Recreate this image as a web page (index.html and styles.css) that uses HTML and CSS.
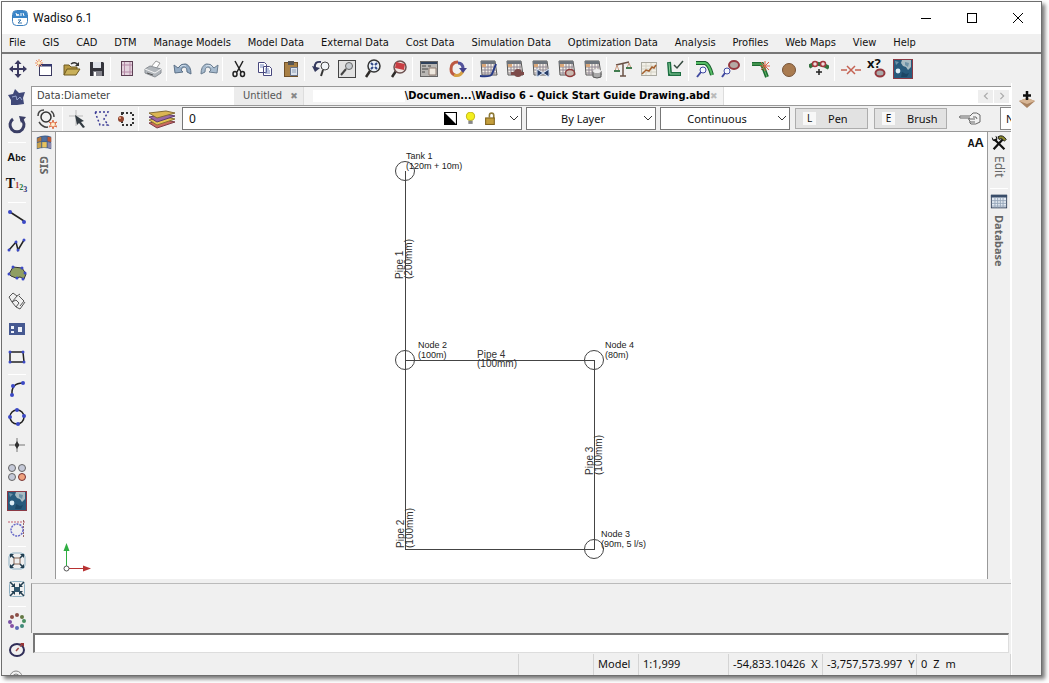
FILE: index.html
```html
<!DOCTYPE html>
<html lang="en">
<head>
<meta charset="utf-8">
<title>Wadiso 6.1</title>
<link rel="stylesheet" href="styles.css">
</head>
<body>
<svg class="defs" aria-hidden="true">
  <defs>
    <symbol id="grid-sheet" viewBox="0 0 20 20">
      <path d="M2 2h14l2 14H3z" fill="#f4efe6" stroke="#555" />
      <path d="M2 2h14v3H2z" fill="#6d747c"/>
      <path d="M3 8h13M3 11h14M3 14h14M6 5v11M9 5v11M12 5v11M15 5v11" stroke="#8f8794" fill="none"/>
      <path d="M3 5h4v3H3z" fill="#d9a77a"/>
    </symbol>
    <symbol id="globe" viewBox="0 0 20 20">
      <rect x=".5" y=".5" width="19" height="19" fill="#285a7c" stroke="#8c3a45"/>
      <path d="M9 1h9v7l-3 3-2-3-3-1-2-3z" fill="#a9bcc4"/>
      <path d="M12 3l4 1-1 4-3-2zM2 2l4 1-3 3z" fill="#6e93a8"/>
      <circle cx="5" cy="12" r="2.4" fill="#dcecf5"/>
      <path d="M9 13l4 2 3-1-2 4H8z" fill="#1c4665"/>
    </symbol>
    <symbol id="chevron" viewBox="0 0 10 10"><path d="M1 3l4 4 4-4" fill="none" stroke="#333"/></symbol>
  </defs>
</svg>
<div class="window">
  <header class="titlebar">
    <svg class="logo" viewBox="0 0 16 16"><rect x=".5" y=".5" width="15" height="15" rx="4" fill="#fff" stroke="#3d7fbd"/><path d="M1 8V4q0-3 3-3h8q3 0 3 3v4z" fill="#3a85c8"/><path d="M4 3l1 3 1-2 1 2M9 3v3M11 3l1 3" stroke="#fff" fill="none"/><path d="M6 10h3l-3 3h4" fill="none" stroke="#3a78ad"/></svg>
    <h1 class="title">Wadiso 6.1</h1>
    <div class="caption">
      <button class="caption-btn" aria-label="Minimize"><svg viewBox="0 0 12 12"><path d="M1 6.5h10" stroke="#000"/></svg></button>
      <button class="caption-btn" aria-label="Maximize"><svg viewBox="0 0 12 12"><rect x="1.5" y="1.5" width="9" height="9" fill="none" stroke="#000"/></svg></button>
      <button class="caption-btn" aria-label="Close"><svg viewBox="0 0 12 12"><path d="M1 1l10 10M11 1L1 11" stroke="#000" fill="none"/></svg></button>
    </div>
  </header>
  <nav class="menubar">
    <button>File</button><button>GIS</button><button>CAD</button><button>DTM</button><button>Manage Models</button><button>Model Data</button><button>External Data</button><button>Cost Data</button><button>Simulation Data</button><button>Optimization Data</button><button>Analysis</button><button>Profiles</button><button>Web Maps</button><button>View</button><button>Help</button>
  </nav>
  <div class="toolbar">
    <button class="tool first" aria-label="Move"><svg viewBox="0 0 20 20"><path d="M10 3v14M3 10h14" stroke="#3b3960" stroke-width="2"/><path d="M10 1l3.500 4h-7zM10 19l3.500-4h-7zM1 10l4-3.500v7zM19 10l-4-3.500v7z" fill="#3b3960"/></svg></button>
    <button class="tool" aria-label="New"><svg viewBox="0 0 20 20"><rect x="4.500" y="5.500" width="12" height="11" fill="#fff" stroke="#3b3960"/><path d="M4 5h13v2.500H4z" fill="#34386e"/><path d="M4 0v8M0 4h8M1 1l6 6M7 1L1 7" stroke="#ee9468"/><circle cx="4" cy="4" r="1.500" fill="#fff2c0"/></svg></button>
    <button class="tool" aria-label="Open"><svg viewBox="0 0 20 20"><path d="M3 16V6h5l2 2h6v3" fill="#b89a45" stroke="#6f5a20"/><path d="M3 16l3-6h13l-4 6z" fill="#c9b05a" stroke="#6f5a20"/><path d="M10 5q4-3 7 1" fill="none" stroke="#333" stroke-width="1.500"/><path d="M18 3v4h-4z" fill="#333"/></svg></button>
    <button class="tool" aria-label="Save"><svg viewBox="0 0 20 20"><path d="M3 3h13l1 1v13H3z" fill="#34343c"/><path d="M6 3h8v6H6z" fill="#dfe3ea"/><path d="M6 12h9v5H6z" fill="#85858d"/><path d="M7 13h2v4H7z" fill="#fff"/></svg></button>
    <span class="sep"></span>
    <button class="tool" aria-label="Page layout"><svg viewBox="0 0 20 20"><rect x="4.500" y="2.500" width="11" height="14" fill="#e4d3de" stroke="#5d4054"/><path d="M7.500 3v13M13 3v13M5 6h10M5 13h10" stroke="#b78ba8" fill="none"/></svg></button>
    <button class="tool" aria-label="Print"><svg viewBox="0 0 20 20"><path d="M8 8l5-6 4 2-4 6z" fill="#fff" stroke="#999"/><path d="M2 10l5-3 11 3v4l-6 4-10-4z" fill="#b1b6bb" stroke="#8b9096"/><path d="M2 10l10 4 6-4" stroke="#f5f5f5" fill="none"/><path d="M4 14l6 2" stroke="#555"/></svg></button>
    <span class="sep"></span>
    <button class="tool" aria-label="Undo"><svg viewBox="0 0 20 20"><path d="M5 9q3-5 8-4 5 2 5 10l-4-2q0-5-3-5-2 0-3 3l2 2-8 1-1-8z" fill="#93abc4" stroke="#5d7187"/><path d="M7 8q3-3 6-1" stroke="#d3e0ec" fill="none"/></svg></button>
    <button class="tool" aria-label="Redo"><svg viewBox="0 0 20 20"><path d="M15 9q-3-5-8-4-5 2-5 10l4-2q0-5 3-5 2 0 3 3l-2 2 8 1 1-8z" fill="#a7bbce" stroke="#6a7d90"/><path d="M13 8q-3-3-6-1" stroke="#d9e4ee" fill="none"/></svg></button>
    <span class="sep"></span>
    <button class="tool" aria-label="Cut"><svg viewBox="0 0 20 20" fill="none" stroke="#222" stroke-width="1.500"><path d="M6 2l6 11M14 2L8 13"/><ellipse cx="6" cy="15" rx="2" ry="2.500"/><ellipse cx="13.500" cy="15" rx="2" ry="2.500"/></svg></button>
    <button class="tool" aria-label="Copy"><svg viewBox="0 0 20 20"><path d="M3.500 3.500h6l2 2v8h-8zM8.500 7.500h6l2 2v7h-8z" fill="#fff" stroke="#48487e"/><path d="M5 6h4M5 8h3M10 10h4M10 12h5M10 14h5" stroke="#7486bd"/></svg></button>
    <button class="tool" aria-label="Paste"><svg viewBox="0 0 20 20"><rect x="3.500" y="3.500" width="13" height="14" fill="#a98045" stroke="#6f5028"/><path d="M7 2h6v4H7z" fill="#555"/><path d="M9.500 8.500h7v8h-7z" fill="#dce3ed" stroke="#66738b"/><path d="M11 11h4M11 13h4" stroke="#8f9fb6"/></svg></button>
    <span class="sep"></span>
    <button class="tool" aria-label="Zoom previous"><svg viewBox="0 0 20 20"><circle cx="14" cy="7" r="4" fill="#f2f5f8" stroke="#444"/><path d="M12 11l-2 6" stroke="#333" stroke-width="2"/><path d="M10 3Q3 2 4 9" fill="none" stroke="#343a5e" stroke-width="2"/><path d="M1 7l3 6 5-4z" fill="#343a5e"/></svg></button>
    <button class="tool" aria-label="Zoom window"><svg viewBox="0 0 20 20"><rect x="1.500" y="1.500" width="17" height="17" fill="#e2e2e2" stroke="#444"/><path d="M9 10l-5 6" stroke="#444" stroke-width="2"/><circle cx="12" cy="7" r="3.500" fill="#c7ccd1" stroke="#666"/></svg></button>
    <button class="tool" aria-label="Zoom extents"><svg viewBox="0 0 20 20"><path d="M7 12l-4 6" stroke="#2e2b28" stroke-width="2.500"/><circle cx="11" cy="7" r="6" fill="#eaf1f8" stroke="#333" stroke-width="1.500"/><path d="M8 4l2 2M14 4l-2 2M8 10l2-2M14 10l-2-2" stroke="#304887" stroke-width="2"/></svg></button>
    <button class="tool" aria-label="Zoom selection"><svg viewBox="0 0 20 20"><path d="M7 12l-4 6" stroke="#2e2b28" stroke-width="2.500"/><circle cx="11" cy="8" r="6" fill="#efe6e2" stroke="#6c5150" stroke-width="1.500"/><path d="M7 3l9 2-1 6-9-2z" fill="#c93e43"/></svg></button>
    <span class="sep"></span>
    <button class="tool" aria-label="Properties"><svg viewBox="0 0 20 20"><rect x="1.500" y="2.500" width="17" height="15" fill="#b9b7b4" stroke="#666"/><path d="M2 3h16v2H2z" fill="#30425c"/><path d="M3 7h4M9 7h3M3 10h6M3 13h3" stroke="#444"/><path d="M10 9h7v7h-7z" fill="#eee8df" stroke="#8d7b70"/></svg></button>
    <button class="tool wide" aria-label="Refresh"><svg viewBox="0 0 20 20" fill="none"><path d="M11 3Q4 3 4 10q0 5 4 6" stroke="#bd5a43" stroke-width="3"/><path d="M7 16q6 2 9-4" stroke="#d6a144" stroke-width="3"/><path d="M11 4q5 0 5 6" stroke="#53539b" stroke-width="3"/><path d="M12 9h8l-4 5z" fill="#45428c"/></svg></button>
    <span class="sep"></span>
    <button class="tool" aria-label="Pipe table"><svg viewBox="0 0 20 20"><use href="#grid-sheet"/><path d="M1 17q11 1 12-2l4-10" stroke="#263a86" stroke-width="2" fill="none"/></svg></button>
    <button class="tool" aria-label="Pump table"><svg viewBox="0 0 20 20"><use href="#grid-sheet"/><circle cx="13" cy="14" r="4" fill="#7c4a49"/><path d="M6 13h13v3H6z" fill="#7c4a49"/></svg></button>
    <button class="tool" aria-label="Valve table"><svg viewBox="0 0 20 20"><use href="#grid-sheet"/><path d="M6 10l6 4 6-4v8l-6-4-6 4z" fill="#273c67" stroke="#dbe8fa"/></svg></button>
    <button class="tool" aria-label="Node table"><svg viewBox="0 0 20 20"><use href="#grid-sheet"/><ellipse cx="13" cy="14" rx="4.500" ry="3.500" fill="#c9b9b0" stroke="#8f3a3a" stroke-width="1.500"/></svg></button>
    <button class="tool" aria-label="Tank table"><svg viewBox="0 0 20 20"><use href="#grid-sheet"/><path d="M10 12v6q4 2 8 0v-6z" fill="#aaa" stroke="#555"/><ellipse cx="14" cy="12" rx="4" ry="2" fill="#eee"/></svg></button>
    <span class="sep"></span>
    <button class="tool" aria-label="Balance"><svg viewBox="0 0 20 20" fill="none"><path d="M3 6l13-3M10 4v13M7 17h6" stroke="#6a5146" stroke-width="1.500"/><path d="M4 6l-2 6h4zM16 4l-2 5h4z" stroke="#c89a80"/><path d="M1 12h6M13 9h6" stroke="#427c50" stroke-width="2"/></svg></button>
    <button class="tool" aria-label="Graph"><svg viewBox="0 0 20 20" fill="none"><rect x="2.500" y="3.500" width="15" height="13" fill="#f2f0e8" stroke="#aaa9a0"/><path d="M3 7h14M3 10h14M3 13h14M7 4v12M12 4v12" stroke="#d5d2c5"/><path d="M3 15l4-4 3 1 3-4 2 1 2-3" stroke="#a4602f" stroke-width="1.500"/></svg></button>
    <button class="tool" aria-label="Check network"><svg viewBox="0 0 20 20" fill="none"><path d="M4 3l1 12h11" stroke="#1d6f42" stroke-width="4"/><path d="M4 4l1 11h10" stroke="#8bd29d"/><path d="M9 6l3 3 6-7" stroke="#364a40" stroke-width="1.500"/></svg></button>
    <span class="sep"></span>
    <button class="tool" aria-label="Find pipe"><svg viewBox="0 0 20 20" fill="none"><path d="M1 4h9q4 1 7 12" stroke="#185b2c" stroke-width="4"/><path d="M1 4h9q4 1 7 12" stroke="#55bd65" stroke-width="2"/><circle cx="8" cy="11" r="3" fill="#f5f9ff" stroke="#4049a0"/><path d="M6 13l-4 5" stroke="#4049a0" stroke-width="2"/></svg></button>
    <button class="tool" aria-label="Find node"><svg viewBox="0 0 20 20" fill="none"><ellipse cx="13" cy="6" rx="5" ry="4" fill="#b5aaa4" stroke="#95383e" stroke-width="2"/><circle cx="6" cy="12" r="3" fill="#f5f9ff" stroke="#4049a0"/><path d="M4 14l-3 4" stroke="#4049a0" stroke-width="2"/></svg></button>
    <span class="sep"></span>
    <button class="tool" aria-label="Split pipe"><svg viewBox="0 0 20 20" fill="none"><path d="M1 5h10l5 13" stroke="#1d6c33" stroke-width="4"/><path d="M1 5h10l5 13" stroke="#65b967"/><path d="M14 2v10M9 7h10M10 3l8 8M18 3l-8 8" stroke="#db6045"/></svg></button>
    <button class="tool wide" aria-label="Node"><svg viewBox="0 0 20 20"><circle cx="10" cy="11" r="6.500" fill="#a97b50" stroke="#765338"/></svg></button>
    <button class="tool wide" aria-label="Add nodes"><svg viewBox="0 0 20 20" fill="none"><path d="M0 8q4-4 10-3t10 4" stroke="#33713f" stroke-width="4"/><circle cx="6" cy="5" r="2.500" fill="#f0dddd" stroke="#a2383d" stroke-width="1.500"/><circle cx="14" cy="5" r="2.500" fill="#f0dddd" stroke="#a2383d" stroke-width="1.500"/><path d="M10 10v6M7 13h6" stroke="#222" stroke-width="1.500"/></svg></button>
    <span class="sep"></span>
    <button class="tool" aria-label="Break line"><svg viewBox="0 0 20 20"><path d="M0 11h6M14 11h6M6 7l8 8M14 7l-8 8" stroke="#c46151" stroke-width="1.500"/></svg></button>
    <button class="tool query" aria-label="Query node"><svg viewBox="0 0 20 20"><ellipse cx="13" cy="14" rx="4.500" ry="3.500" fill="#aaa" stroke="#95383e" stroke-width="2"/></svg><span>x?</span></button>
    <button class="tool" aria-label="Web map"><svg viewBox="0 0 20 20"><use href="#globe"/></svg></button>
  </div>
  <div class="body">
    <aside class="side-tools">
      <button class="tool" aria-label="Polygon"><svg viewBox="0 0 20 20"><path d="M8 2l4 4 6-1-2 6 1 6-7 1-6 0 0-5-3-5 5-1z" fill="#404878"/><path d="M5 10l4-1 1 4 3-3 2 3" stroke="#98a6cf" fill="none"/></svg></button>
      <button class="tool" aria-label="Rotate"><svg viewBox="0 0 20 20"><path d="M6 4a7 7 0 1 0 8 0" fill="none" stroke="#3b3f66" stroke-width="3"/><path d="M12 1l7 1-5 6z" fill="#3b3f66"/></svg></button>
      <span class="rule"></span>
      <button class="tool glyph">A<small>bc</small></button>
      <button class="tool glyph serif">T<small>1<sub>2</sub><sub class="low">3</sub></small></button>
      <span class="rule"></span>
      <button class="tool" aria-label="Line"><svg viewBox="0 0 20 20"><path d="M3 5l14 9" stroke="#222" stroke-width="1.500"/><g fill="#3b49c6"><circle cx="3" cy="5" r="2"/><circle cx="17" cy="15" r="2"/></g></svg></button>
      <button class="tool" aria-label="Polyline"><svg viewBox="0 0 20 20"><path d="M2 15l7-8 2 8 6-10" stroke="#222" stroke-width="1.500" fill="none"/><g fill="#3b49c6"><circle cx="2" cy="15" r="1.500"/><circle cx="9" cy="7" r="1.500"/><circle cx="11" cy="15" r="1.500"/><circle cx="17" cy="5" r="1.500"/></g></svg></button>
      <button class="tool" aria-label="Area"><svg viewBox="0 0 20 20"><path d="M2 11l4-7 9 1 4 6-2 5-4-2-4 1-5-2z" fill="#8f9e62" stroke="#333"/><g fill="#3b49c6"><circle cx="6" cy="4" r="1.500"/><circle cx="15" cy="5" r="1.500"/><circle cx="2" cy="11" r="1.500"/><circle cx="18" cy="10" r="1.500"/><circle cx="16" cy="16" r="1.500"/><circle cx="10" cy="15" r="1.500"/></g></svg></button>
      <button class="tool" aria-label="Parcels"><svg viewBox="0 0 20 20"><path d="M2 6l4-4 4 3-5 6zM10 5l3-2M5 11l4 5 3-4-3-3zM12 5l5 5-4 5M9 16l4 2 5-7" fill="none" stroke="#555"/></svg></button>
      <button class="tool" aria-label="Block"><svg viewBox="0 0 20 20"><rect x="2" y="4" width="16" height="12" fill="#465991"/><path d="M4 7h3v3H4zM4 12h3v2H4zM11 8h4v5h-4z" fill="#eef2fa"/></svg></button>
      <button class="tool" aria-label="Rectangle"><svg viewBox="0 0 20 20"><path d="M3 5h13l1 10H3z" fill="none" stroke="#222" stroke-width="1.500"/><g fill="#3b49c6"><circle cx="3" cy="5" r="1.500"/><circle cx="16" cy="5" r="1.500"/><circle cx="3" cy="15" r="1.500"/><circle cx="17" cy="15" r="1.500"/></g></svg></button>
      <span class="rule"></span>
      <button class="tool" aria-label="Arc"><svg viewBox="0 0 20 20"><path d="M5 16Q4 4 16 4" fill="none" stroke="#222" stroke-width="1.500"/><g fill="#3b49c6"><circle cx="5" cy="16" r="2"/><circle cx="6" cy="7" r="2"/><circle cx="16" cy="4" r="2"/></g></svg></button>
      <button class="tool" aria-label="Circle"><svg viewBox="0 0 20 20"><circle cx="10" cy="10" r="7" fill="none" stroke="#222" stroke-width="1.500"/><g fill="#3b49c6"><circle cx="10" cy="3" r="2"/><circle cx="17" cy="9" r="2"/><circle cx="3" cy="10" r="2"/><circle cx="11" cy="17" r="2"/></g></svg></button>
      <button class="tool" aria-label="Point"><svg viewBox="0 0 20 20"><path d="M10 3v14M2 10h16" stroke="#777"/><path d="M10 6l2 4-2 4-2-4z" fill="#222"/><circle cx="10" cy="10" r="2" fill="#333"/></svg></button>
      <button class="tool" aria-label="Symbols"><svg viewBox="0 0 20 20" stroke="#666"><circle cx="5" cy="5" r="3.500" fill="#c5c9d8"/><circle cx="15" cy="5" r="3.500" fill="#c5c9d8"/><circle cx="5" cy="14" r="3.500" fill="#c5c9d8"/><circle cx="15" cy="14" r="3.500" fill="#f0a27e" stroke="#733"/></svg></button>
      <button class="tool" aria-label="Image"><svg viewBox="0 0 20 20"><use href="#globe"/></svg></button>
      <button class="tool" aria-label="Trim"><svg viewBox="0 0 20 20" fill="none"><path d="M1 3h17" stroke="#c05f70" stroke-dasharray="2 1"/><path d="M16.500 1v18" stroke="#966" stroke-dasharray="2 1"/><circle cx="10" cy="11" r="6" stroke="#6668c7" stroke-width="1.500" stroke-dasharray="2 1"/></svg></button>
      <span class="rule"></span>
      <button class="tool" aria-label="Enlarge"><svg viewBox="0 0 20 20" fill="none"><path d="M2 6q0-4 4-4M14 2q4 0 4 4M2 14q0 4 4 4M14 18q4 0 4-4M6 2h8M18 6v8M6 18h8M2 6v8" stroke="#8fb0c2"/><path d="M7 7h6v6H7z" stroke="#865"/><path d="M4 4l3 3M16 4l-3 3M4 16l3-3M16 16l-3-3" stroke="#233e50" stroke-width="1.500"/><path d="M3 3h4L3 7zM17 3h-4l4 4zM3 17h4l-4-4zM17 17h-4l4-4z" fill="#233e50"/></svg></button>
      <button class="tool" aria-label="Shrink"><svg viewBox="0 0 20 20" fill="none"><rect x="2.500" y="2.500" width="15" height="15" rx="3" stroke="#8fb0c2"/><path d="M3 3l4 4M17 3l-4 4M3 17l4-4M17 17l-4-4" stroke="#233e50" stroke-width="1.500"/><path d="M8 4v4H4zM12 4v4h4zM8 16v-4H4zM12 16v-4h4z" fill="#233e50"/><path d="M7 8h6v5H7z" fill="#31576e"/></svg></button>
      <span class="rule"></span>
      <button class="tool" aria-label="Array"><svg viewBox="0 0 20 20"><g fill="#8b4f47"><circle cx="5" cy="6" r="2"/><circle cx="10" cy="4" r="2"/><circle cx="3" cy="11" r="2" fill="#7951a4"/><circle cx="5" cy="15" r="2" fill="#8551a4"/><circle cx="10" cy="17" r="2" fill="#5a6bb6"/><circle cx="15" cy="15" r="2" fill="#408a79"/><circle cx="17" cy="10" r="2" fill="#489061"/><circle cx="15" cy="6" r="2" fill="#647844"/></g></svg></button>
      <button class="tool" aria-label="Radius"><svg viewBox="0 0 20 20"><ellipse cx="10" cy="11" rx="7" ry="6" fill="none" stroke="#302e58" stroke-width="2"/><path d="M9 12l7-8" stroke="#a34a45" stroke-width="1.500" stroke-dasharray="4 2"/><path d="M13 4h4v4z" fill="#933"/></svg></button>
      <button class="tool" aria-label="Offset"><svg viewBox="0 0 20 20" fill="none" stroke="#888"><circle cx="9" cy="10" r="6"/><circle cx="9" cy="10" r="3"/></svg></button>
    </aside>
    <main class="main">
      <div class="tabs">
        <button class="tab data">Data:Diameter</button>
        <button class="tab">Untitled <span class="close">✖</span></button>
        <button class="tab active"><span class="mask"></span>\Documen...\Wadiso 6 - Quick Start Guide Drawing.abd<span class="close faint">✖</span></button>
        <span class="pager">
          <button aria-label="Previous tab"><svg viewBox="0 0 10 10"><path d="M7 1L3 5l4 4" fill="none" stroke="#aaa" stroke-width="1.500"/></svg></button>
          <button aria-label="Next tab"><svg viewBox="0 0 10 10"><path d="M3 1l4 4-4 4" fill="none" stroke="#aaa" stroke-width="1.500"/></svg></button>
        </span>
      </div>
      <div class="props">
        <div class="group">
          <button class="tool" aria-label="Snap"><svg viewBox="0 0 20 20" fill="none"><circle cx="9" cy="8" r="5" stroke="#333" stroke-width="1.500"/><path d="M1 7q0-6 6-6M2 13q4 6 9 5M14 2q3 2 3 6" stroke="#444" stroke-width="1.500"/><path d="M16 11l1 3 3-1-2 2 2 3-3-1-1 3-1-3-3 1 2-3-2-2 3 1z" fill="#fff0d0" stroke="#df754e"/></svg></button>
          <span class="sep"></span>
          <button class="tool" aria-label="Select"><svg viewBox="0 0 20 20"><path d="M8 1v16M1 7h14" stroke="#bbb"/><path d="M7 6l9 6-3 1 4 5-2 1-4-5-2 2z" fill="#333c43"/></svg></button>
          <button class="tool" aria-label="Lasso"><svg viewBox="0 0 20 20"><path d="M3 3h13l-4 7 4 6H8z" fill="none" stroke="#3d3d96" stroke-width="1.500" stroke-dasharray="2 2"/></svg></button>
          <button class="tool" aria-label="Select node"><svg viewBox="0 0 20 20"><rect x="6" y="4" width="11" height="12" fill="none" stroke="#333" stroke-width="2" stroke-dasharray="2 2"/><circle cx="5" cy="10" r="3" fill="#8f432d"/><circle cx="4" cy="9" r="1" fill="#f3b28f"/></svg></button>
          <span class="sep"></span>
        </div>
        <button class="layers" aria-label="Layers"><svg viewBox="0 0 28 20"><path d="M1 14l17-3 9 2-18 6z" fill="#cb695f" stroke="#7c3d48"/><path d="M1 11l17-3 9 2-18 6z" fill="#e5c454" stroke="#8a7330"/><path d="M1 8l17-3 9 2-18 6z" fill="#9a68a5" stroke="#5e3c70"/><path d="M1 4l17-2 9 2-18 5z" fill="#dcb653" stroke="#846c35"/></svg></button>
        <div class="combo layer">
          <select aria-label="Layer"><option>0</option></select>
          <span class="marks">
            <svg viewBox="0 0 12 12"><path d="M.5.5h11v11H.5z" fill="#fff" stroke="#000"/><path d="M0 0l12 12H0z"/></svg>
            <svg viewBox="0 0 12 12"><circle cx="6" cy="4" r="3.800" fill="#f3ef1d" stroke="#c9bd20"/><path d="M4 8h4v3H4z" fill="#888"/></svg>
            <svg viewBox="0 0 12 12"><path d="M5 5V3q0-2 2-2t2 2v4" fill="none" stroke="#8e7a37" stroke-width="1.500"/><rect x="1.500" y="5.500" width="8" height="6" fill="#c39e3d" stroke="#80631d"/></svg>
          </span>
          <svg class="arrow"><use href="#chevron"/></svg>
        </div>
        <div class="combo"><select aria-label="Color"><option>By Layer</option></select><svg class="arrow"><use href="#chevron"/></svg></div>
        <div class="combo"><select aria-label="Line style"><option>Continuous</option></select><svg class="arrow"><use href="#chevron"/></svg></div>
        <div class="pair">
          <button class="push"><span class="key">L</span>Pen</button>
          <button class="push"><span class="key">E</span>Brush</button>
        </div>
        <button class="hand" aria-label="Pick properties"><svg viewBox="0 0 24 16" fill="none" stroke="#666"><path d="M12 5H2q-1 1 0 2h10M12 5l3-3q4-1 7 2v7q-4 3-9 2-2-1-1-3-2-1-1-3M11 8h6M12 11h5M15 6q4-1 4 2"/></svg></button>
        <input class="name-box" aria-label="Name" value="N">
      </div>
      <div class="workspace">
        <div class="dock">
          <svg viewBox="0 0 20 20"><path d="M2 4q8-4 16-1v14q-8-3-16 0z" fill="#405e8c"/><path d="M2.500 5q3-2 4.500-2v5q-2 0-4.500 1z" fill="#b87a3a"/><path d="M8 3h5v5H8z" fill="#52709f"/><path d="M14 3l4 1v5l-4-1z" fill="#bc5a34"/><path d="M2.500 10q3-1 4.500-1v6q-2 0-4.500 1z" fill="#c9a24a"/><path d="M8 9h5v6H8z" fill="#e8c35e"/><path d="M14 9l4 1v6l-4-1z" fill="#8b86a8"/></svg>
          <button class="upright bold">GIS</button>
        </div>
        <div class="canvas">
          <svg class="network" role="img" aria-label="Pipe network">
            <g transform="translate(-56 -132)">
              <g fill="none" stroke="#444">
                <path d="M405.500 171v378.500M405 360.500h189M594.500 360v190M405 549.500h190"/>
                <circle cx="405" cy="171" r="9.500"/><circle cx="405" cy="360" r="9.500"/><circle cx="594" cy="360" r="9.500"/><circle cx="594" cy="549" r="9.500"/>
              </g>
              <g class="labels">
                <text x="406" y="159">Tank 1</text><text x="406" y="169">(120m + 10m)</text>
                <text x="418" y="348">Node 2</text><text x="418" y="358">(100m)</text>
                <text x="605" y="348">Node 4</text><text x="605" y="358">(80m)</text>
                <text x="601" y="537">Node 3</text><text x="601" y="547">(90m, 5 l/s)</text>
              </g>
              <g class="labels pipes">
                <text x="477" y="358">Pipe 4</text><text x="477" y="367">(100mm)</text>
                <g transform="translate(403 279) rotate(-90)"><text>Pipe 1</text><text y="9">(200mm)</text></g>
                <g transform="translate(404 548) rotate(-90)"><text>Pipe 2</text><text y="9">(100mm)</text></g>
                <g transform="translate(593 475) rotate(-90)"><text>Pipe 3</text><text y="9">(100mm)</text></g>
              </g>
            </g>
          </svg>
          <svg class="axes" viewBox="0 0 32 32"><path d="M5.500 6v18" stroke="#2fae42" /><path d="M5.500 1l3 8h-6z" fill="#2fae42"/><path d="M8 26.500h15" stroke="#b83232"/><path d="M30 26.500l-8 3v-6z" fill="#b83232"/><circle cx="5.500" cy="26.500" r="2.500" fill="#fff" stroke="#555"/></svg>
          <button class="text-size"><small>A</small>A</button>
        </div>
        <div class="dock right">
          <svg viewBox="0 0 20 20"><path d="M4 17L14 6M6 7l10 10" stroke="#111" stroke-width="2.500"/><path d="M9 3q5-3 9 3l-2 2-3-3-3 1z" fill="#8c8a2d" stroke="#111"/><path d="M2 3l2 3 3-1-1-3q4 2 1 6Q2 9 2 3z" fill="#111"/></svg>
          <button class="upright">Edit</button>
          <span class="rule"></span>
          <svg viewBox="0 0 20 20"><rect x="1.500" y="2.500" width="17" height="14" fill="#e3eaf2" stroke="#2e3e57"/><path d="M1 2h18v3H1z" fill="#394d69"/><path d="M2 8.500h16M2 11.500h16M2 14.500h16M5.500 5v11M8.500 5v11M11.500 5v11M14.500 5v11" stroke="#93a4b8"/></svg>
          <button class="upright bold">Database</button>
        </div>
      </div>
      <div class="output"></div>
      <input class="command" aria-label="Command">
      <footer class="status">
        <span></span><span class="c-blank"></span><span class="c-model">Model</span><span class="c-scale">1:1,999</span>
        <span class="c-coord">-54,833.10426<b>X</b></span><span class="c-coord">-3,757,573.997<b>Y</b></span><span class="c-coord">0<b>Z</b><b>m</b></span>
      </footer>
    </main>
    <aside class="right-tools">
      <button class="tool" aria-label="Add layer"><svg viewBox="0 0 20 20"><path d="M2 12l8-3 8 3-8 7z" fill="#a98260"/><path d="M2 12l8 3 8-3-8-3z" fill="#d7b594"/><path d="M10 2v9M6 6.500h8" stroke="#111" stroke-width="2.500"/></svg></button>
    </aside>
  </div>
</div>
</body>
</html>
```
FILE: styles.css
```css
* { box-sizing: border-box; }
body {
  margin: 0;
  height: 100vh;
  padding: 1px 7px 7px 1px;
  background: #fff;
  color: #111;
  font: 11px/16px "Noto Sans", "Open Sans", sans-serif;
  overflow: hidden;
}
button, select, input { font: inherit; color: inherit; margin: 0; }
button { padding: 0; border: 0; background: none; white-space: nowrap; }
svg { display: block; flex: none; }
.defs { position: absolute; width: 0; height: 0; }
.window {
  height: 100%;
  display: flex;
  flex-direction: column;
  border: 1px solid #6e6e6e;
  background: #f0f0f0;
  box-shadow: 3px 3px 4px #777;
}
.titlebar { display: flex; align-items: center; height: 32px; padding-left: 10px; background: #fff; }
.logo { width: 16px; height: 16px; }
.title { flex: 1; margin: 0 0 0 5px; font: 400 12px/16px Roboto, sans-serif; }
.caption { display: flex; }
.caption-btn { width: 46px; height: 30px; display: grid; place-items: center; }
.caption-btn svg { width: 12px; height: 12px; }
.menubar {
  display: flex;
  justify-content: space-between;
  align-items: center;
  height: 20px;
  padding: 0 125px 0 7px;
  border-bottom: 2px solid #777;
  font-family: "DejaVu Sans Condensed", "DejaVu Sans", sans-serif;
}
.toolbar { display: flex; align-items: center; height: 29px; padding-left: 2px; }
.tool { flex: none; width: 26px; height: 28px; display: grid; place-items: center; }
.tool svg { width: 20px; height: 20px; }
.tool.wide { width: 30px; }
.tool.first { width: 28px; }
.sep { flex: none; width: 4px; height: 24px; border-left: 1px solid #fff; }
.query { position: relative; }
.query span { position: absolute; left: 3px; top: 1px; font: bold 13px/14px "Noto Sans", sans-serif; }
.body { flex: 1; min-height: 0; display: flex; }
.side-tools { width: 29px; display: flex; flex-direction: column; align-items: center; overflow: hidden; }
.rule { flex: none; width: 18px; height: 4px; padding-top: 1px; border-bottom: 1px solid #fff; }
.glyph { display: flex; align-items: baseline; justify-content: center; font: bold 11px/28px "Liberation Sans", sans-serif; }
.glyph small { font-size: 9px; }
.glyph.serif { font: bold 14px/26px "Liberation Serif", serif; }
.serif small { font-size: 8px; color: #a33; }
.serif sub { display: inline-block; font-size: 8px; line-height: 8px; vertical-align: -2px; color: #273; }
.serif .low { vertical-align: -4px; color: #337; }
.main { flex: 1; min-width: 0; display: flex; flex-direction: column; padding-top: 3px; }
.tabs { display: flex; height: 20px; border: solid #999; border-width: 1px 0 1px 1px; background: #fff; font-family: "DejaVu Sans Condensed", "DejaVu Sans", sans-serif; }
.tab { display: flex; align-items: center; padding: 0 5px 0 9px; background: #ececec; border-right: 1px solid #ddd; color: #555; }
.tab.data { width: 202px; padding-left: 5px; background: #fff; color: #444; border: 0; }
.tab.active { background: #f4f4f4; color: #000; font-weight: 700; }
.mask { width: 92px; height: 12px; background: #fff; }
.close { margin-left: 8px; font: 9px/12px "DejaVu Sans", sans-serif; color: #888; }
.close.faint { margin-left: 0; color: #bbb; }
.pager { display: flex; align-items: center; gap: 1px; margin-left: auto; padding-right: 2px; }
.pager button { width: 15px; height: 13px; display: grid; place-items: center; background: #eee; }
.pager svg { width: 8px; height: 8px; }
.props {
  display: flex;
  align-items: center;
  gap: 4px;
  height: 26px;
  border: solid #999;
  border-width: 0 0 1px 1px;
  overflow: hidden;
}
.props > * { flex: none; }
.group { display: flex; align-items: center; }
.group .tool { width: 24px; }
.group .tool:first-child { width: 30px; }
.layers { padding: 0 2px; }
.layers svg { width: 28px; height: 20px; }
.combo { position: relative; width: 130px; height: 23px; }
.combo.layer { width: 340px; }
.combo select { width: 100%; height: 100%; padding: 0 22px 0 6px; border: 1px solid #777; border-radius: 0; background: #fff; appearance: none; text-align-last: center; }
.combo.layer select { text-align-last: left; font-size: 12px; }
.arrow { position: absolute; right: 3px; top: 6px; width: 10px; height: 10px; }
.marks { position: absolute; right: 25px; top: 5px; display: flex; gap: 7px; }
.marks svg { width: 13px; height: 13px; }
.pair { display: flex; gap: 6px; padding-left: 1px; }
.push { display: flex; align-items: center; width: 73px; height: 21px; padding-left: 7px; border: 1px solid #adadad; background: #e2e2e2; }
.key { width: 13px; margin-right: 12px; line-height: 13px; background: #f8f8f8; font-size: 10px; }
.hand { margin-left: 7px; }
.hand svg { width: 24px; height: 16px; }
.name-box { width: 60px; height: 23px; margin-left: 14px; padding: 0 5px; border: 1px solid #888; background: #fff; }
.workspace { flex: 1; min-height: 0; display: flex; border-left: 1px solid #999; }
.dock { flex: none; width: 24px; display: flex; flex-direction: column; align-items: center; gap: 4px; padding-top: 2px; border-right: 1px solid #999; }
.dock.right { border-right: 1px solid #fff; border-left: 1px solid #999; }
.dock svg { width: 18px; height: 18px; }
.upright { writing-mode: vertical-rl; color: #666; line-height: 14px; font-size: 12px; }
.upright.bold { font-weight: 700; font-size: 11px; }
.dock .rule { height: 8px; }
.canvas { position: relative; flex: 1; min-width: 0; background: #fff; }
.network { width: 100%; height: 100%; }
.labels { font-family: "Liberation Sans", Arial, sans-serif; font-size: 9px; fill: #222; }
.labels.pipes { font-size: 10px; fill: #333; }
.axes { position: absolute; left: 5px; bottom: 5px; width: 32px; height: 32px; }
.text-size { position: absolute; right: 3px; top: 3px; font: bold 13px/16px "Liberation Sans", sans-serif; }
.text-size small { font-size: 10px; }
.output { height: 50px; margin-top: 4px; border-top: 1px solid #bbb; border-left: 1px solid #999; }
.command { height: 20px; margin: 0 2px; border: solid #777; border-width: 2px 1px 1px 2px; border-right-color: #ddd; border-bottom-color: #ddd; border-radius: 0; background: #fff; outline: 0; }
.status { display: flex; height: 22px; padding-top: 1px; line-height: 20px; }
.status > span { flex: none; border-right: 1px solid #d4d4d4; padding-left: 4px; white-space: nowrap; }
.status > span:first-child { flex: 1; }
.status .c-blank { width: 75px; }
.status .c-model { width: 45px; }
.status .c-scale { width: 90px; }
.status .c-coord { width: 94px; display: flex; gap: 6px; }
.status b { font-weight: 400; }
.right-tools { width: 30px; padding: 2px 2px; border-left: 1px solid #fff; }
```
